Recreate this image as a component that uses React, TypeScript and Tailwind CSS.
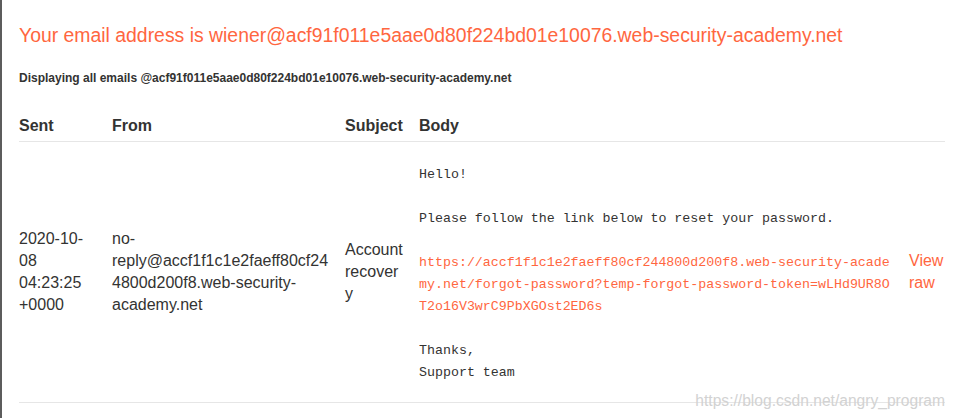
import React from "react";

const body = `Hello!

Please follow the link below to reset your password.

`;
const link =
  "https://accf1f1c1e2faeff80cf244800d200f8.web-security-academy.net/forgot-password?temp-forgot-password-token=wLHd9UR8OT2o16V3wrC9PbXGOst2ED6s";

export default function App() {
  return (
    <div
      className="relative min-h-[418px] w-[955px] bg-white border-l-2 border-[#5c5c5c] pl-[17px] pt-[23px] text-[#333332]"
      style={{ fontFamily: '"Liberation Sans", Arial, sans-serif' }}
    >
      <h1 className="text-[19.4px] leading-[24px] text-[#ff6640] whitespace-nowrap">
        Your email address is wiener@acf91f011e5aae0d80f224bd01e10076.web-security-academy.net
      </h1>
      <h4 className="mt-[23px] text-[12px] leading-[16px] font-bold whitespace-nowrap">
        Displaying all emails @acf91f011e5aae0d80f224bd01e10076.web-security-academy.net
      </h4>
      <table className="mt-[29px] w-[926px] table-fixed border-collapse text-[16px] leading-[22px]">
        <colgroup>
          <col className="w-[93px]" />
          <col className="w-[233px]" />
          <col className="w-[74px]" />
          <col className="w-[490px]" />
          <col className="w-[36px]" />
        </colgroup>
        <thead>
          <tr className="border-b border-[#e6e6e6] text-left">
            <th className="p-0 pb-[4px] font-bold">Sent</th>
            <th className="p-0 pb-[4px] font-bold">From</th>
            <th className="p-0 pb-[4px] font-bold">Subject</th>
            <th className="p-0 pb-[4px] font-bold">Body</th>
            <th className="p-0 pb-[4px]"></th>
          </tr>
        </thead>
        <tbody>
          <tr className="border-b border-[#e6e6e6]">
            <td className="p-0 pr-[17px] align-middle break-words">
              2020-10-08 04:23:25 +0000
            </td>
            <td className="p-0 pr-[13px] align-middle break-words">
              no-reply@accf1f1c1e2faeff80cf244800d200f8.web-security-academy.net
            </td>
            <td className="p-0 pr-[15px] align-middle break-words">
              Account recovery
            </td>
            <td className="p-0 pr-[15px] pt-[22px] pb-[18px] align-middle">
              <pre
                className="m-0 whitespace-pre-wrap break-all text-[13.3px] leading-[22px] text-[#333332]"
                style={{ fontFamily: '"Liberation Mono", "Courier New", monospace' }}
              >
                {body}
                <span className="text-[#ff6640]">{link}</span>
                {"\n\nThanks,\nSupport team"}
              </pre>
            </td>
            <td className="p-0 align-middle text-[#ff6640] break-words">View raw</td>
          </tr>
        </tbody>
      </table>
      <div className="absolute right-[10px] top-[390px] text-[15.6px] leading-[22px] text-[#d2d2d2] whitespace-nowrap">
        https://blog.csdn.net/angry_program
      </div>
    </div>
  );
}
